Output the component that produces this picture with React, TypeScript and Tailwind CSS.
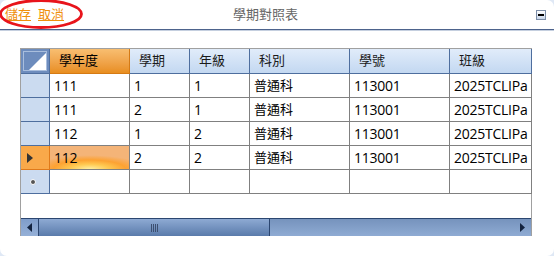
import React from "react";

const cols = [80, 60, 60, 100, 100, 82];
const headers = ["學年度", "學期", "年級", "科別", "學號", "班級"];
const rows = [
  ["111", "1", "1", "普通科", "113001", "2025TCLIPa"],
  ["111", "2", "1", "普通科", "113001", "2025TCLIPa"],
  ["112", "1", "2", "普通科", "113001", "2025TCLIPa"],
  ["112", "2", "2", "普通科", "113001", "2025TCLIPa"],
];

const font = { fontFamily: '"Liberation Sans", "Noto Sans CJK TC", sans-serif' };
const numFont = { fontFamily: '"Open Sans", "Noto Sans CJK TC", sans-serif' };

export default function App() {
  return (
    <div className="w-[554px] h-[256px] bg-[#dfe8f5]" style={font}>
      <div className="relative w-[554px] h-[256px] bg-white rounded-[7px] overflow-hidden">
        {/* title bar */}
        <div className="flex items-center h-[29px] text-[13px]">
          <div className="flex w-[233px] pl-[5px] gap-[7px] text-[#f0900c]">
            <span className="underline">儲存</span>
            <span className="underline">取消</span>
          </div>
          <span className="text-[#666666]">學期對照表</span>
          <div className="flex-1" />
          <div className="mr-[8px] w-[10px] h-[10px] border border-[#7d8ea8] bg-gradient-to-b from-white to-[#c8d6ea] flex items-center justify-center">
            <div className="w-[6px] h-[2px] bg-black" />
          </div>
        </div>
        <div className="h-px bg-[#4d638c]" />
        <div className="h-px bg-[#c5cfdf]" />

        <svg className="absolute left-0 top-0" width="90" height="32">
          <ellipse cx="41" cy="14" rx="40.5" ry="13.5" fill="none" stroke="#e8141b" strokeWidth="2.8" />
        </svg>

        {/* grid */}
        <div className="mt-[17px] ml-[20px] w-[512px] h-[188px] border border-[#a0a0a0] border-b-0 flex flex-col">
          {/* header */}
          <div className="flex h-[25px]">
            <div className="w-[29px] shrink-0 bg-[#6d8cbd] border-r border-b border-[#4e6e9e] relative">
              <div className="absolute inset-[2px] border border-[#a9bedd]" />
              <svg className="absolute right-[3px] bottom-[3px]" width="17" height="17">
                <polygon points="17,0 17,17 0,17" fill="#ffffff" />
              </svg>
            </div>
            {headers.map((h, i) => (
              <div
                key={h}
                style={{ width: cols[i] }}
                className={
                  "shrink-0 flex items-center pl-[9px] text-[13px] border-r border-b " +
                  (i === 0
                    ? "bg-gradient-to-b from-[#f8be70] to-[#e88e1e] border-[#d57a14] text-black"
                    : "bg-gradient-to-b from-[#e1ecfa] to-[#c3d8f1] border-[#4e6e9e] text-[#1a1a1a]")
                }
              >
                {h}
              </div>
            ))}
          </div>
          {rows.map((r, ri) => {
            const cur = ri === 3;
            return (
              <div key={ri} className="flex h-[24px]">
                <div
                  className={
                    "w-[29px] shrink-0 border-r border-b flex items-center pl-[6px] " +
                    (cur ? "bg-[#f9a94a] border-[#e07a1a]" : "bg-[#cbdbf0] border-[#4e6e9e]")
                  }
                >
                  {cur && (
                    <svg width="6" height="10">
                      <polygon points="0,0 6,5 0,10" fill="#333" />
                    </svg>
                  )}
                </div>
                {r.map((c, ci) => (
                  <div
                    key={ci}
                    style={{ width: cols[ci], ...(ci === 3 ? {} : numFont) }}
                    className={
                      "shrink-0 flex items-center pl-[4px] text-black border-r border-b border-[#808080] whitespace-nowrap overflow-hidden " +
                      (ci === 3 ? "text-[13px] " : "text-[14px] tracking-[-0.25px] ") +
                      (cur && ci === 0
                        ? "bg-[radial-gradient(ellipse_70%_60%_at_50%_100%,#fff0a0_0%,#ffc850_35%,#fda232_65%,#f4b478_100%)]"
                        : "bg-white")
                    }
                  >
                    {c}
                  </div>
                ))}
              </div>
            );
          })}
          {/* new row */}
          <div className="flex h-[24px]">
            <div className="w-[29px] shrink-0 bg-[#cbdbf0] border-r border-b border-[#4e6e9e] flex items-center pl-[9px]">
              <div className="w-[6px] h-[6px] rounded-full bg-[#555] border border-white" />
            </div>
            {cols.map((w, ci) => (
              <div key={ci} style={{ width: w }} className="shrink-0 bg-white border-r border-b border-[#808080]" />
            ))}
          </div>
          <div className="flex-1" />
          {/* scrollbar */}
          <div className="flex h-[18px] border-t border-[#2b4670] bg-gradient-to-b from-[#7693bd] to-[#8fabd3]">
            <div className="w-[17px] flex items-center justify-center bg-gradient-to-b from-[#7f9dca] to-[#95b0d7]">
              <svg width="5" height="9">
                <polygon points="5,0 0,4.5 5,9" fill="#13233f" />
              </svg>
            </div>
            <div className="w-[232px] border-x border-[#2b4670] bg-gradient-to-b from-[#8eaad3] to-[#5a7bab] flex items-center justify-center">
              <div className="flex gap-[1px] h-[8px]">
                <div className="w-px bg-[#3c4f70]" />
                <div className="w-px bg-[#3c4f70]" />
                <div className="w-px bg-[#3c4f70]" />
                <div className="w-px bg-[#3c4f70]" />
              </div>
            </div>
            <div className="flex-1" />
            <div className="w-[17px] flex items-center justify-center">
              <svg width="5" height="9">
                <polygon points="0,0 5,4.5 0,9" fill="#13233f" />
              </svg>
            </div>
          </div>
        </div>
      </div>
    </div>
  );
}
